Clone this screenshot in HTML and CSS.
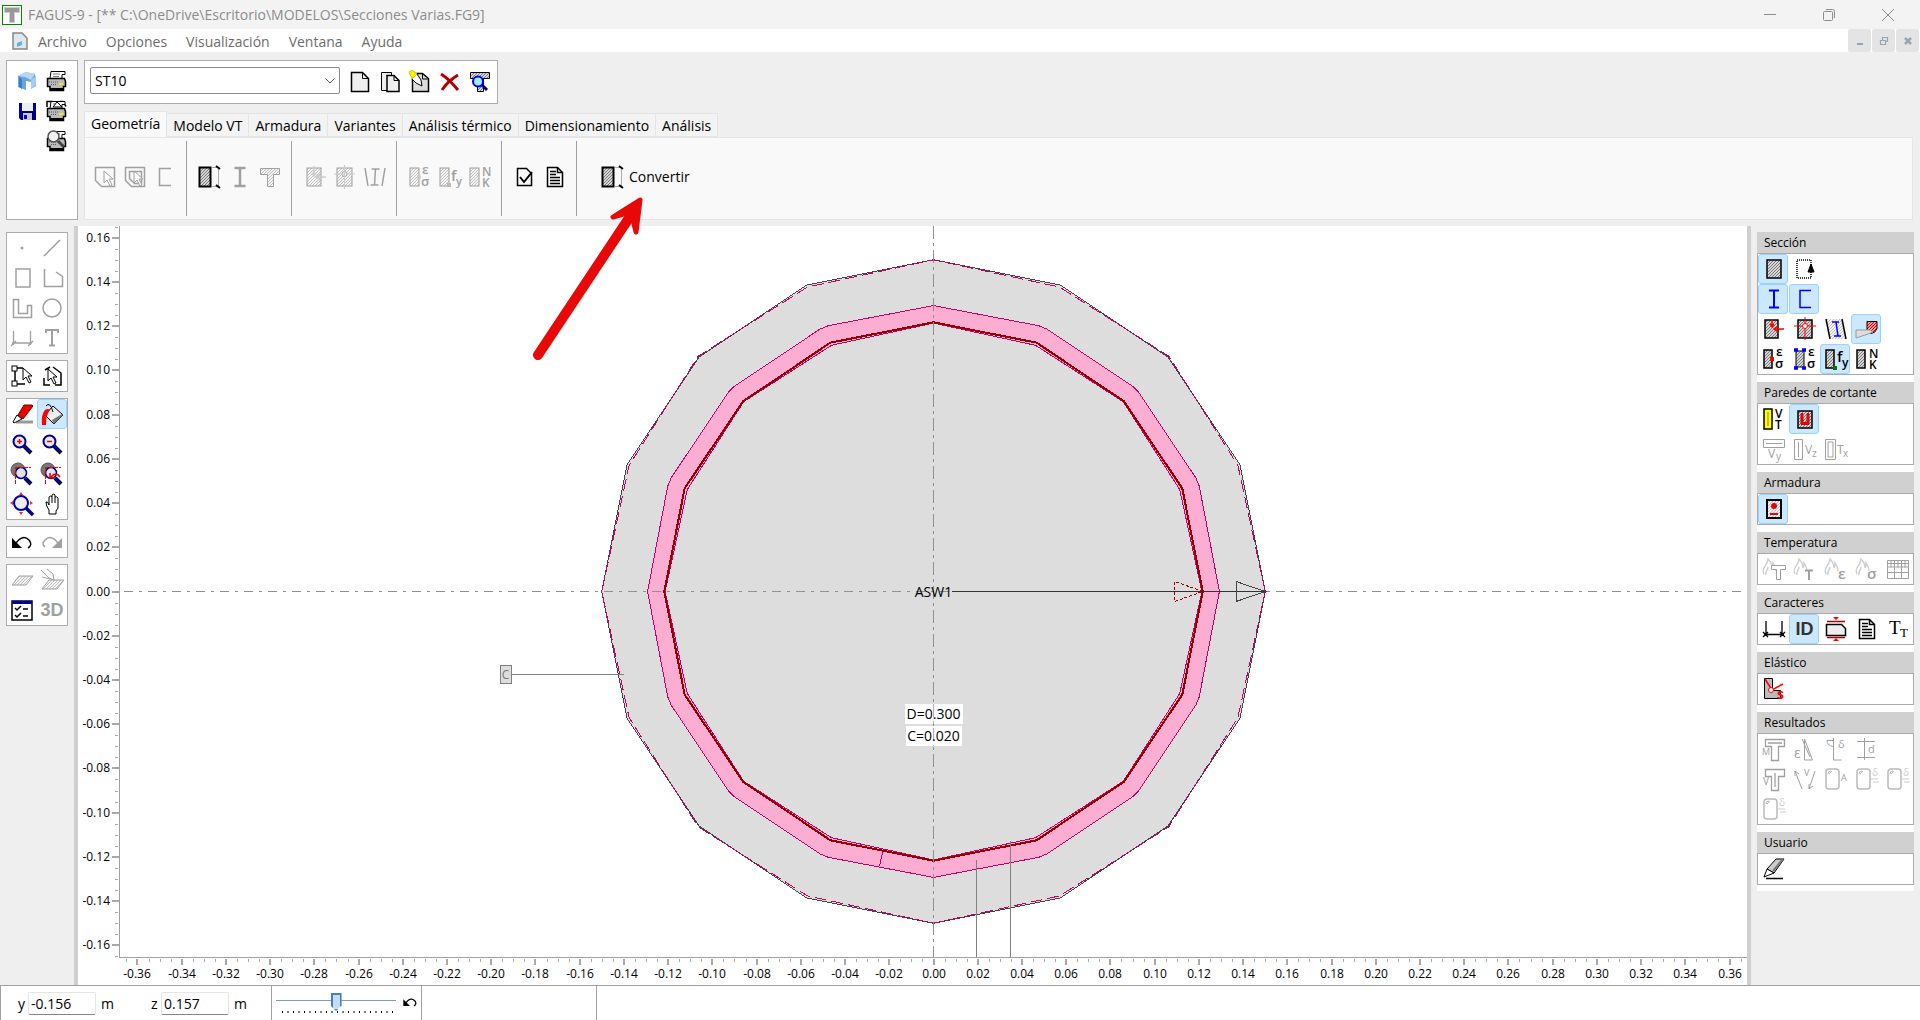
FILE: index.html
```html
<!DOCTYPE html>
<html lang="es">
<head>
<meta charset="utf-8">
<title>FAGUS-9</title>
<link rel="stylesheet" href="styles.css">
</head>
<body>
<svg class="defs" width="0" height="0" aria-hidden="true">
  <defs>
    <pattern id="h" width="3" height="3" patternUnits="userSpaceOnUse"><rect width="3" height="3" fill="#d4d4d4" stroke="none"/><path d="M-1 1L1-1M0 3L3 0M2 4L4 2" stroke="#666" stroke-width=".8"/></pattern>
    <pattern id="hg" width="3" height="3" patternUnits="userSpaceOnUse"><rect width="3" height="3" fill="#f4f4f4" stroke="none"/><path d="M-1 1L1-1M0 3L3 0M2 4L4 2" stroke="#b4b4b4" stroke-width=".8"/></pattern>
    <pattern id="hr" width="3" height="3" patternUnits="userSpaceOnUse"><rect width="3" height="3" fill="#f99" stroke="none"/><path d="M-1 1L1-1M0 3L3 0M2 4L4 2" stroke="#d00"/></pattern>
    <symbol id="printer" viewBox="0 0 24 24"><path d="M6 2.500h14v3h-3v4H5z" fill="#fff"/><path d="M8 5h7M8 7.500h6" stroke="#777"/><path d="M2.500 9.500h17l1 3v5h-2v4H5v-4H2.500z" fill="#bbb" stroke-width="1.500"/><path d="M4 13h10M6 15.500h6" stroke="#555" stroke-dasharray="1 1"/><path d="M14 15h4" stroke="#ee0" stroke-width="2"/><path d="M5 20h14" stroke-width="2"/></symbol>
    <symbol id="lens" viewBox="0 0 24 24"><path d="M14 14l7 7" stroke="#000" stroke-width="4"/><path d="M14 14l6.500 6.500" stroke="#00c" stroke-width="2"/><circle cx="9.500" cy="9.500" r="6" fill="#e8e8f4" stroke="#00008b" stroke-width="2"/></symbol>
    <symbol id="graylens" viewBox="0 0 24 24"><circle cx="8" cy="8" r="7" fill="#777" stroke="#555"/><path d="M15 16l6 6" stroke="#000" stroke-width="4"/><path d="M15 16l5.500 5.500" stroke="#00c" stroke-width="2"/><circle cx="11" cy="11" r="5.500" fill="#e4e4ec" stroke="#00008b" stroke-width="1.500"/><path d="M5.500 22V5.500H21" stroke="#e00" stroke-dasharray="4 1"/></symbol>
    <symbol id="convert" viewBox="0 0 24 24"><rect x="1.500" y="2.500" width="11" height="19" fill="url(#h)" stroke-width="2"/><path d="M14 2.500h7M14 21.500h7M20.500 3v18" stroke="#aaa"/><path d="M18 1l4 3M18 20l4 3" stroke-width="2"/></symbol>
    <symbol id="flame" viewBox="0 0 24 24"><path d="M2 17C-1 10 5 10 6 2c3 3 4 6 4 9 1-2 1-3 1-5 2 3 3 4 3 8M4 18c-1-4 2-5 2-8" stroke="#d0d0d0" stroke-width="1.500"/></symbol>
    <symbol id="cursor" viewBox="0 0 12 18"><path d="M1 1v12l3-3 3 6 2-1-3-6h4z" fill="#fff"/></symbol>
    <symbol id="stress" viewBox="0 0 24 24"><text font-size="13" font-weight="600"><tspan x="14" y="9">ε</tspan><tspan x="13" y="21">σ</tspan></text></symbol>
    <symbol id="page" viewBox="0 0 24 24"><path d="M4.500 2.500h10l5 5v14h-15z"/><path d="M14.500 2.500v5h5"/></symbol>
    <symbol id="lines" viewBox="0 0 24 24"><path d="M7 6.500h6M7 9.500h6M7 12.500h10M7 15.500h10M7 18.500h10" stroke-width="1.500"/></symbol>
    <symbol id="frame" viewBox="0 0 24 24"><rect x="2" y="2" width="13" height="20" rx="3" stroke-width="1.500" stroke="#bbb"/><path d="M4 7q0-3 3-3M5 7l3-3" stroke="#bbb"/></symbol>
  </defs>
</svg>

<header class="titlebar">
  <svg class="logo" viewBox="0 0 20 20"><rect x=".5" y=".5" width="19" height="19" fill="#fff" stroke="#080"/><path d="M2.500 2.500h15v5h-5v10h-5v-10h-5z" fill="#999" stroke="#ccc"/></svg>
  <h1>FAGUS-9 - [** C:\OneDrive\Escritorio\MODELOS\Secciones Varias.FG9]</h1>
  <div class="winbtns">
    <button aria-label="Minimizar"><svg viewBox="0 0 12 12"><path d="M0 5.500h12"/></svg></button>
    <button aria-label="Restaurar"><svg viewBox="0 0 12 12"><rect x=".5" y="2.500" width="9" height="9" rx="1"/><path d="M3 .5h6.500q2 0 2 2V9"/></svg></button>
    <button aria-label="Cerrar"><svg viewBox="0 0 12 12"><path d="M0 0l12 12M12 0L0 12"/></svg></button>
  </div>
</header>

<nav class="menubar">
  <svg class="doc" viewBox="0 0 16 18"><path d="M1 1h9l5 5v11H1z" fill="#dfe6ec" stroke="#888" stroke-width="1.500"/><path d="M5 11l5-2v4l-5 2z" fill="#5ab4e8" stroke="none"/></svg>
  <a href="#">Archivo</a><a href="#">Opciones</a><a href="#">Visualización</a><a href="#">Ventana</a><a href="#">Ayuda</a>
  <div class="mdi">
    <button aria-label="Minimizar ventana"><svg viewBox="0 0 10 10"><path d="M2 8h6" stroke-width="2"/></svg></button>
    <button aria-label="Restaurar ventana"><svg viewBox="0 0 10 10"><path d="M1.500 4.500h5v4h-5zM3.500 4V1.500h5v4H7" stroke-width="1.200"/></svg></button>
    <button aria-label="Cerrar ventana"><svg viewBox="0 0 10 10"><path d="M2 2l6 6M8 2L2 8" stroke-width="2.500"/></svg></button>
  </div>
</nav>

<div class="top">
  <div class="box filebox">
    <button class="ib" aria-label="Abrir"><svg viewBox="0 0 24 24"><g stroke="none"><path d="M3 7l8-4 9 2 1 6v6l-5 3v-7l-5-1v9l-8-3z" fill="#6aa5dd"/><path d="M3 7l8-4 9 2-4 6-6-3z" fill="#b5d9f5"/><path d="M7 10v10l-3-2V8z" fill="#3f7fc4"/><path d="M16 11l5-4v9l-5 4z" fill="#a5cdf0"/></g></svg></button>
    <button class="ib" aria-label="Imprimir"><svg viewBox="0 0 24 24"><use href="#printer"/></svg></button>
    <button class="ib" aria-label="Guardar"><svg viewBox="0 0 24 24"><g stroke="none"><path d="M4 4h3v8h11V4h3v17H6l-2-2z" fill="#00008b"/><path d="M7 4h11v8H7z" fill="#eee"/><path d="M8 14h9v7H8z" fill="#c8c8c8"/><path d="M9 16h3v4H9z" fill="#00f"/></g></svg></button>
    <button class="ib" aria-label="Imprimir lista"><svg viewBox="0 0 24 24"><path d="M2 8V2.500h5L10 6M15 2.500h3l3 5" stroke-width="1.500"/><use href="#printer"/><path d="M8 8l4-5 5 5z" fill="#fff"/></svg></button>
    <span></span>
    <button class="ib" aria-label="Vista previa"><svg viewBox="0 0 24 24"><use href="#printer"/><path d="M13 12l6 6" stroke="#444" stroke-width="3"/><circle cx="8.500" cy="7.500" r="5.500" fill="#f0f0f0" stroke="#555" stroke-width="1.500"/></svg></button>
  </div>
  <div class="topright">
    <div class="box combo">
      <div class="selectwrap">
        <select aria-label="Sección activa"><option>ST10</option></select>
        <svg viewBox="0 0 10 6"><path d="M.5.500L5 5 9.500.500"/></svg>
      </div>
      <button class="ib" aria-label="Nueva"><svg viewBox="0 0 24 24"><path d="M3.500 2.500h11l6 6v13h-17z" fill="#efefef" stroke-width="1.500"/><path d="M14.500 2.500v6h6"/></svg></button>
      <button class="ib" aria-label="Copiar"><svg viewBox="0 0 24 24"><path d="M3.500 2.500h10v18h-10z" fill="#efefef"/><path d="M9 5.500h7l5 5v11H9z" fill="#efefef" stroke-width="1.500"/><path d="M16 5.500v5h5"/></svg></button>
      <button class="ib" aria-label="Editar"><svg viewBox="0 0 24 24"><path d="M4.500 4.500V21.500h16v-13l-6-5h-8" fill="#ddd" stroke-width="1.500"/><path d="M14.500 4v5h6"/><path d="M4 9l5-5 4 6 1 6-6-3z" fill="#fff"/><path d="M1 2l3-2 5 4-5 5z" fill="#fe0" stroke="#cc0"/></svg></button>
      <button class="ib" aria-label="Borrar"><svg viewBox="0 0 24 24"><g stroke="#b00000"><path d="M3 4q8 5 17 16" stroke-width="3"/><path d="M20 5Q10 11 4 20" stroke-width="3"/></g></svg></button>
      <button class="ib" aria-label="Buscar sección"><svg viewBox="0 0 24 24"><path d="M2.500 2.500h19v6h-6v13h-6v-13h-7z" fill="url(#h)"/><path d="M13 14l6 6" stroke="#00008b" stroke-width="3"/><circle cx="10" cy="11.500" r="5" fill="#9fefff" stroke="#00f" stroke-width="2"/></svg></button>
    </div>
    <div class="tabs" role="tablist">
      <button role="tab" aria-selected="true" class="tab on">Geometría</button><button role="tab" class="tab">Modelo VT</button><button role="tab" class="tab">Armadura</button><button role="tab" class="tab">Variantes</button><button role="tab" class="tab">Análisis térmico</button><button role="tab" class="tab">Dimensionamiento</button><button role="tab" class="tab">Análisis</button>
    </div>
    <div class="ribbon">
      <div class="group off">
        <button class="ib"><svg viewBox="0 0 24 24"><path d="M2.500 2.500h19v19h-13l-6-6z" stroke-width="1.500"/><use href="#cursor" x="10" y="5" width="12" height="18"/></svg></button>
        <button class="ib"><svg viewBox="0 0 24 24"><path d="M2.500 2.500h19v19h-13l-6-6zM6.500 6.500h12v12h-7l-5-5z" stroke-width="1.500"/><use href="#cursor" x="10" y="5" width="12" height="18"/></svg></button>
        <button class="ib"><svg viewBox="0 0 24 24"><path d="M18 3.500H6.500v17H18" stroke-width="1.500"/></svg></button>
      </div>
      <div class="group">
        <button class="ib"><svg viewBox="0 0 24 24"><use href="#convert"/></svg></button>
        <button class="ib off"><svg viewBox="0 0 24 24"><path d="M6.500 3h11M6.500 21h11M12 3v18" stroke-width="2.500"/></svg></button>
        <button class="ib off"><svg viewBox="0 0 24 24"><path d="M2.500 3.500h19v6h-6v12h-6v-12h-7z" fill="url(#hg)"/></svg></button>
      </div>
      <div class="group off">
        <button class="ib"><svg viewBox="0 0 24 24"><rect x="4" y="3" width="14" height="18" fill="url(#hg)"/><path d="M11 1v9M9 8l2 3 2-3M23 12h-9M17 9l-4 3 4 3" stroke="#ccc" stroke-width="1.500"/></svg></button>
        <button class="ib"><svg viewBox="0 0 24 24"><rect x="4" y="3" width="15" height="18" fill="url(#hg)"/><circle cx="11.500" cy="9" r="2.500" fill="#fff"/><path d="M1 9h21M11.500 0v24" stroke="#ccc"/></svg></button>
        <button class="ib"><svg viewBox="0 0 24 24"><path d="M2 3l3 18M22 3l-3 18M8.500 4h8M7.500 20h8M12.500 4l-1 16" stroke-width="1.500"/></svg></button>
      </div>
      <div class="group off">
        <button class="ib"><svg viewBox="0 0 24 24"><rect x="2" y="3" width="9" height="18" fill="url(#hg)"/><path d="M9 12h4" stroke-width="3" stroke="#ccc"/><use href="#stress"/></svg></button>
        <button class="ib"><svg viewBox="0 0 24 24"><rect x="2" y="3" width="9" height="18" fill="url(#hg)"/><path d="M9 20h4" stroke-width="4" stroke="#bbb"/><text font-weight="600"><tspan x="13" y="16" font-size="15">f</tspan><tspan x="18" y="20" font-size="11">y</tspan></text></svg></button>
        <button class="ib"><svg viewBox="0 0 24 24"><rect x="2" y="3" width="9" height="18" fill="url(#hg)"/><text font-size="12" font-weight="600"><tspan x="14" y="11">N</tspan><tspan x="14" y="22">K</tspan></text></svg></button>
      </div>
      <div class="group">
        <button class="ib"><svg viewBox="0 0 24 24"><path d="M4.500 3.500h9l5 5v12h-14z" fill="#fff" stroke-width="1.500"/><path d="M7 12l4 5 8-10" stroke-width="2"/></svg></button>
        <button class="ib"><svg viewBox="0 0 24 24"><use href="#page" stroke-width="1.500"/><use href="#lines"/></svg></button>
      </div>
      <button class="convert"><svg viewBox="0 0 24 24"><use href="#convert"/></svg>Convertir</button>
    </div>
  </div>
</div>

<main class="work">
  <aside class="tools">
    <div class="box off">
      <button class="ib"><svg viewBox="0 0 24 24"><circle cx="12" cy="12" r="1.500" fill="currentColor" stroke="none"/></svg></button>
      <button class="ib"><svg viewBox="0 0 24 24"><path d="M4 20L20 4" stroke-width="1.500"/></svg></button>
      <button class="ib"><svg viewBox="0 0 24 24"><rect x="6" y="3" width="14" height="18" stroke-width="1.500"/></svg></button>
      <button class="ib"><svg viewBox="0 0 24 24"><path d="M4.500 3v17.500h18v-10L16 6" stroke-width="1.500"/></svg></button>
      <button class="ib"><svg viewBox="0 0 24 24"><path d="M3.500 3.500h5v14h9v-8h4v12h-18z" stroke-width="1.500"/></svg></button>
      <button class="ib"><svg viewBox="0 0 24 24"><circle cx="12" cy="12" r="9" stroke-width="1.500"/></svg></button>
      <button class="ib"><svg viewBox="0 0 24 24"><path d="M3.500 5v14M20.500 5v14M2 17h20M1 20l5-5M18 20l5-5" stroke-width="1.300"/></svg></button>
      <button class="ib"><svg viewBox="0 0 24 24"><path d="M6 7V4h12v3M12 4v15M9 19.500h6" stroke-width="2"/></svg></button>
    </div>
    <div class="box">
      <button class="ib"><svg viewBox="0 0 24 24"><path d="M5 7v14M5 20h10M7 4h6" stroke-width="1.500"/><rect x="2" y="2" width="5" height="5" fill="#fff"/><rect x="2" y="17" width="5" height="5" fill="#fff"/><use href="#cursor" x="12" y="3" width="12" height="18"/></svg></button>
      <button class="ib"><svg viewBox="0 0 24 24"><path d="M5 6l5-3M13 3l8 6v12h-6M10 21H4v-7" stroke-width="1.500"/><use href="#cursor" x="7" y="4" width="12" height="18"/></svg></button>
    </div>
    <div class="box">
      <button class="ib"><svg viewBox="0 0 24 24"><path d="M6 20h17" stroke="#999" stroke-width="3"/><path d="M14 3h8l1 1-10 13-5-4z" fill="#e00" stroke="#700"/><path d="M7 13l5 4-8 4-1-1z" fill="#fff"/></svg></button>
      <button class="ib sel"><svg viewBox="0 0 24 24"><path d="M13 4l10 9-9 9-9-9z" fill="#eee"/><path d="M12 18l10-6 1 1-9 9z" fill="#777" stroke="none"/><path d="M6 4q4-5 7 6"/><path d="M2 23q-1-11 3-15 3-2 5 0-4 4-4 15z" fill="#f00" stroke="none"/></svg></button>
      <button class="ib"><svg viewBox="0 0 24 24"><use href="#lens"/><path d="M7 9.500h5M9.500 7v5" stroke="#e00" stroke-width="1.500"/></svg></button>
      <button class="ib"><svg viewBox="0 0 24 24"><use href="#lens"/><path d="M7 9.500h5" stroke="#e00" stroke-width="1.500"/></svg></button>
      <button class="ib"><svg viewBox="0 0 24 24"><use href="#graylens"/></svg></button>
      <button class="ib"><svg viewBox="0 0 24 24"><use href="#graylens"/><path d="M10 11v5h5M11 15q5-6 9 0" stroke="#e00" stroke-width="1.500"/></svg></button>
      <button class="ib"><svg viewBox="0 0 24 24"><path d="M15 15l8 8" stroke="#00008b" stroke-width="3.500"/><circle cx="11" cy="11" r="7" fill="#eee" stroke="#00a" stroke-width="2"/><path d="M9 3l2-3 2 3zM9 20l2 3 2-3zM3 9l-3 2 3 2zM20 9l3 2-3 2z" fill="#f22" stroke="none"/></svg></button>
      <button class="ib"><svg viewBox="0 0 24 24"><path d="M9 22v-4q-3-4-3-8 2-1 3 3V5q2-2 3 0V3q2-2 3 0v2q2-1 3 1v10l-2 3v3z" fill="#fff"/><path d="M12 5v6M15 5v6"/></svg></button>
    </div>
    <div class="box">
      <button class="ib"><svg viewBox="0 0 24 24"><path d="M6 13q7-9 13-3 4 5-1 8" stroke-width="1.500"/><path d="M2 8v10h10z" fill="#000" stroke="none"/></svg></button>
      <button class="ib off"><svg viewBox="0 0 24 24"><path d="M18 13Q11 4 5 10q-4 4 0 7" stroke-width="1.500"/><path d="M22 8v10H12z" fill="currentColor" stroke="none"/></svg></button>
    </div>
    <div class="box off">
      <button class="ib"><svg viewBox="0 0 24 24"><path d="M9 8h14l-7 9H2z" fill="url(#hg)"/></svg></button>
      <button class="ib"><svg viewBox="0 0 24 24"><path d="M9 12h15l-7 9H2z" fill="url(#hg)"/><path d="M1 2l8 8 5 2-1-6-6-5M2 9l8 2"/></svg></button>
      <button class="ib on"><svg viewBox="0 0 24 24"><rect x="2" y="3" width="20" height="19" fill="#fff" stroke-width="1.500"/><path d="M2 4.500h20" stroke="#00009a" stroke-width="3"/><path d="M5 10l2 2 4-4M5 17l2 2 4-4M13 11h5M13 18h5" stroke-width="1.500"/></svg></button>
      <button class="ib label3d">3D</button>
    </div>
  </aside>

  <section class="canvas" aria-label="Sección ST10"><svg id="plot"></svg></section>

  <aside class="side">
    <div class="stack">
      <h2>Sección</h2>
      <div class="box">
        <button class="ib sel"><svg viewBox="0 0 24 24"><rect x="5" y="3" width="14" height="18" fill="url(#h)" stroke-width="1.500"/></svg></button>
        <button class="ib"><svg viewBox="0 0 24 24"><rect x="4" y="3" width="14" height="18" stroke-dasharray="1 1" stroke-width="1.500"/><path d="M15 15l3-8 3 8z" fill="#000"/></svg></button>
        <i></i><i></i><i></i>
        <button class="ib sel"><svg viewBox="0 0 24 24"><path d="M7 3.500h10M7 20.500h10M12 4v16" stroke="#00f" stroke-width="2"/></svg></button>
        <button class="ib sel"><svg viewBox="0 0 24 24"><path d="M18 3.500H7v17h11" stroke="#00f" stroke-width="1.500"/></svg></button>
        <i></i><i></i><i></i>
        <button class="ib"><svg viewBox="0 0 24 24"><rect x="3" y="3" width="13" height="18" fill="url(#h)" stroke-width="1.500"/><path d="M10 2v7M8 7l2 3 2-3M22 12h-9M16 9l-4 3 4 3" stroke="#f00" stroke-width="1.500"/></svg></button>
        <button class="ib"><svg viewBox="0 0 24 24"><rect x="5" y="3" width="14" height="18" fill="url(#h)" stroke-width="1.500"/><circle cx="12" cy="9" r="2.500" fill="#fff" stroke="#f00"/><path d="M1 9h8M15 9h8M12 0v6M12 12v11" stroke="#f00"/></svg></button>
        <button class="ib"><svg viewBox="0 0 24 24"><path d="M2 2h16l4 20H6z" fill="url(#hg)" stroke="none"/><path d="M2 2l4 20M18 2l4 20" stroke-width="1.500"/><path d="M8 5h7M10 19h7M12 5l2 14" stroke="#00f" stroke-width="1.500"/></svg></button>
        <button class="ib sel"><svg viewBox="0 0 24 24"><path d="M12 4.500h10v7q-2 5-6 5l-4-3z" fill="url(#hr)"/><path d="M1 13h14l3 2-5 2-12 4z" fill="#ddd" stroke="#999"/></svg></button>
        <i></i>
        <button class="ib"><svg viewBox="0 0 24 24"><rect x="2" y="3" width="8" height="18" fill="url(#h)" stroke-width="1.500"/><path d="M8 12h4" stroke="#f00" stroke-width="4"/><use href="#stress"/></svg></button>
        <button class="ib"><svg viewBox="0 0 24 24"><rect x="3" y="4" width="8" height="16" fill="url(#h)"/><path d="M1 3h4M9 3h4M1 21h4M9 21h4" stroke="#00f" stroke-width="3.500"/><use href="#stress" x="1"/></svg></button>
        <button class="ib sel"><svg viewBox="0 0 24 24"><rect x="2" y="3" width="8" height="18" fill="url(#h)" stroke-width="1.500"/><path d="M9 21h4" stroke="#070" stroke-width="4"/><text font-weight="600"><tspan x="13" y="15" font-size="15">f</tspan><tspan x="18" y="20" font-size="12">y</tspan></text></svg></button>
        <button class="ib"><svg viewBox="0 0 24 24"><rect x="2" y="3" width="8" height="18" fill="url(#h)" stroke-width="1.500"/><text font-size="12" font-weight="600"><tspan x="14" y="11">N</tspan><tspan x="14" y="22">K</tspan></text></svg></button>
      </div>
      <h2>Paredes de cortante</h2>
      <div class="box">
        <button class="ib"><svg viewBox="0 0 24 24"><rect x="2" y="2" width="8" height="20" fill="#ff0" stroke-width="1.500"/><path d="M6 5v14" stroke="#880"/><text font-size="12" font-weight="600"><tspan x="13" y="11">V</tspan><tspan x="13" y="22">T</tspan></text></svg></button>
        <button class="ib sel"><svg viewBox="0 0 24 24"><rect x="5" y="4" width="14" height="17" fill="url(#h)" stroke-width="1.500"/><path d="M8 6.500h2v9h4v-9h2v11H8z" fill="#f00" stroke="#d00"/></svg></button>
        <i></i><i></i><i></i>
        <button class="ib off"><svg viewBox="0 0 24 24"><path d="M1.500 2.500h21v8h-21zM4 6.500h16" /><text><tspan x="6" y="21" font-size="12">V</tspan><tspan x="14" y="23" font-size="10">y</tspan></text></svg></button>
        <button class="ib off"><svg viewBox="0 0 24 24"><path d="M1.500 2.500h8v20h-8zM5.500 5v15"/><text><tspan x="12" y="17" font-size="12">V</tspan><tspan x="19" y="20" font-size="10">z</tspan></text></svg></button>
        <button class="ib off"><svg viewBox="0 0 24 24"><path d="M1.500 2.500h10v20h-10zM4 5h5v15H4z"/><text><tspan x="13" y="17" font-size="12">T</tspan><tspan x="19" y="20" font-size="10">x</tspan></text></svg></button>
      </div>
      <h2>Armadura</h2>
      <div class="box">
        <button class="ib sel"><svg viewBox="0 0 24 24"><rect x="5" y="3" width="14" height="18" fill="url(#hg)" stroke-width="2"/><circle cx="12" cy="9" r="3" fill="#e00" stroke="none"/><path d="M8 17h8" stroke="#f00" stroke-width="2"/></svg></button>
      </div>
      <h2>Temperatura</h2>
      <div class="box off">
        <button class="ib"><svg viewBox="0 0 24 24"><use href="#flame"/><path d="M9.500 8.500h14v4h-5v10h-4v-10h-5z" fill="#fff"/></svg></button>
        <button class="ib"><svg viewBox="0 0 24 24"><use href="#flame"/><path d="M12 13.500h8M16 13.500V23" stroke-width="2"/></svg></button>
        <button class="ib"><svg viewBox="0 0 24 24"><use href="#flame"/><text x="14" y="22" font-size="15" font-weight="600">ε</text></svg></button>
        <button class="ib"><svg viewBox="0 0 24 24"><use href="#flame"/><text x="12" y="22" font-size="15" font-weight="600">σ</text></svg></button>
        <button class="ib"><svg viewBox="0 0 24 24"><path d="M1.500 3.500h21v18h-21zM1.500 6.500h21M1.500 10h21M1.500 15.500h21M5 3.500v7M8.500 3.500v18M12 3.500v7M15.500 3.500v18M19 3.500v7"/></svg></button>
      </div>
      <h2>Caracteres</h2>
      <div class="box">
        <button class="ib"><svg viewBox="0 0 24 24"><path d="M4 4v15M20 4v15M2 17.500h20M1 20l5-5M18 20l5-5M1 15l5 5M18 15l5 5" stroke-width="1.300"/></svg></button>
        <button class="ib sel labelid">ID</button>
        <button class="ib"><svg viewBox="0 0 24 24"><path d="M2.500 7.500h15l4 4v7h-19z" fill="#eee" stroke-width="1.500"/><path d="M3 4.500h18M3 20.500h18" stroke="#a00" stroke-width="1.500"/><path d="M9 0h6l-3 3zM9 24h6l-3-3z" fill="#f00" stroke="none"/></svg></button>
        <button class="ib"><svg viewBox="0 0 24 24"><use href="#page" stroke-width="1.500"/><use href="#lines"/></svg></button>
        <button class="ib serif"><svg viewBox="0 0 24 24"><text><tspan x="3" y="17" font-size="19">T</tspan><tspan x="14" y="20" font-size="13">T</tspan></text></svg></button>
      </div>
      <h2>Elástico</h2>
      <div class="box">
        <button class="ib"><svg viewBox="0 0 24 24"><path d="M2.500 1.500h8v12h8v8h-16z" fill="#bbb"/><path d="M3 2l7 11 11-6" stroke="#f00" stroke-width="1.500"/><circle cx="9" cy="13" r="2.500" fill="#fff" stroke="#f00"/><text x="15" y="22" font-size="14" font-weight="700" class="red">s</text></svg></button>
      </div>
      <h2>Resultados</h2>
      <div class="box off">
        <button class="ib"><svg viewBox="0 0 24 24"><path d="M3.500 2.500h19v7h-6v14h-7v-14h-6zM6 6h14" stroke-width="1.300"/><text x="0" y="18" font-size="9">M</text></svg></button>
        <button class="ib"><svg viewBox="0 0 24 24"><path d="M11.500 2v21h8zM9 2l8 18" /><text x="1" y="21" font-size="14">ε</text></svg></button>
        <button class="ib"><svg viewBox="0 0 24 24"><path d="M9.500 1v22h8M9 3.500H3q0 5 6 6"/><text x="14" y="11" font-size="11">δ</text></svg></button>
        <button class="ib"><svg viewBox="0 0 24 24"><path d="M2 4.500h18M2 20.500h18M9.500 1v22"/><text x="13" y="16" font-size="11">d</text></svg></button>
        <i></i>
        <button class="ib"><svg viewBox="0 0 24 24"><path d="M3.500 2.500h19v7h-6v14h-7v-14h-6zM13 6v14" stroke-width="1.300"/><text x="1" y="18" font-size="10">V</text></svg></button>
        <button class="ib"><svg viewBox="0 0 24 24"><path d="M2 4l7 18M22 4l-6 18M2 9V4l4 3M16 17v5l4-3"/><text x="11" y="9" font-size="9">V</text></svg></button>
        <button class="ib"><svg viewBox="0 0 24 24"><use href="#frame"/><text x="17" y="14" font-size="9">A</text></svg></button>
        <button class="ib faint"><svg viewBox="0 0 24 24"><use href="#frame"/><text x="17" y="9" font-size="10">δ</text><path d="M16 12h7M18 15h6"/></svg></button>
        <button class="ib faint"><svg viewBox="0 0 24 24"><use href="#frame"/><text x="17" y="9" font-size="10">δ</text><path d="M16 12h7M18 15h6"/></svg></button>
        <button class="ib faint"><svg viewBox="0 0 24 24"><use href="#frame"/><text x="17" y="9" font-size="10">δ</text><path d="M16 12h7M18 15h6"/></svg></button>
      </div>
      <h2>Usuario</h2>
      <div class="box">
        <button class="ib"><svg viewBox="0 0 24 24"><path d="M4 21.500h17" stroke-width="1.500"/><path d="M5 12l9-10h8L12 16z" fill="#ccc"/><path d="M11 14L21 2" stroke="#777" stroke-width="2"/><path d="M2 20l3-8 7 4z" fill="#fff"/></svg></button>
      </div>
    </div>
  </aside>
</main>

<footer class="status">
  <div class="cell coords">
    <label for="cy">y</label><input id="cy" value="-0.156"><span>m</span>
    <label for="cz" class="second">z</label><input id="cz" value="0.157"><span>m</span>
  </div>
  <div class="cell zoom">
    <div class="slider"><input type="range" aria-label="Escala" min="0" max="20" value="10"><svg class="ticks"><path d="M0 1H200" stroke="#000" stroke-width="2" stroke-dasharray="1 4.500"/></svg></div>
    <button class="undo" aria-label="Restablecer"><svg viewBox="0 0 24 24"><path d="M6 13q7-9 13-3 4 5-1 8" stroke-width="2"/><path d="M2 8v10h10z" fill="#000" stroke="none"/></svg></button>
  </div>
  <div class="cell blank"></div>
  <div class="cell rest"></div>
</footer>

<svg class="arrow" viewBox="0 0 120 180" aria-hidden="true"><path d="M8 165L101 25" stroke="#e90808" stroke-width="10" stroke-linecap="round"/><path d="M110 10L83 27 97 23 103 30 106 42z" fill="#e90808" stroke="#e90808" stroke-width="5" stroke-linejoin="round"/></svg>
<script src="plot.js"></script>
</body>
</html>
```
FILE: styles.css
```css
* { box-sizing: border-box; }
body {
  margin: 0;
  min-height: 100vh;
  display: flex;
  flex-direction: column;
  background: #efefef;
  color: #000;
  font-family: "Open Sans", "Noto Sans", sans-serif;
  font-size: 14px;
  position: relative;
}
button { font: inherit; color: inherit; background: none; border: 0; padding: 0; margin: 0; }
svg { fill: none; stroke: currentColor; }
svg text { fill: currentColor; stroke: none; }
svg text.red { fill: #f00; }
symbol { overflow: visible; }
.defs { position: absolute; }

.titlebar { height: 29px; display: flex; align-items: center; background: #f3f3f3; color: #8c8c8c; padding-left: 2px; }
.logo { width: 20px; height: 20px; }
.titlebar h1 { margin: 0 0 0 6px; font-size: 14px; font-weight: 400; flex: 1; }
.winbtns { display: flex; margin-right: 3px; }
.winbtns button { width: 59px; height: 28px; display: grid; place-items: center; }
.winbtns svg { width: 12px; height: 12px; }

.menubar { height: 23px; display: flex; align-items: center; background: #fff; color: #6d6d6d; padding-left: 12px; }
.menubar .doc { width: 16px; height: 18px; margin-right: 1px; }
.menubar a { color: inherit; text-decoration: none; padding: 2px 10px 0 9px; }
.mdi { margin-left: auto; display: flex; gap: 1px; padding-right: 1px; color: #97a5b3; }
.mdi button { width: 23px; height: 23px; background: #e4e4e4; border-radius: 2px; display: grid; place-items: center; }
.mdi svg { width: 10px; height: 10px; }

.box { border: 1px solid #ababab; background: #fff; }
.ib { width: 30px; height: 30px; display: grid; place-items: center; color: #000; border: 1px solid transparent; border-radius: 3px; }
.ib svg { width: 24px; height: 24px; overflow: visible; }
.off, .off .ib, .ib.off { color: #a0a0a0; }
.off .ib.on { color: #000; }
.off .ib.faint { color: #ccc; }
.ib.sel { background: #cce8ff; border-color: #99d1ff; }

.top { display: flex; gap: 6px; padding: 8px 7px 6px 6px; }
.filebox { width: 72px; height: 160px; padding: 5px; display: grid; grid-template-columns: 30px 30px; grid-auto-rows: 30px; }
.topright { flex: 1; min-width: 0; display: flex; flex-direction: column; }
.combo { width: 414px; height: 44px; display: flex; align-items: center; padding-left: 5px; }
.selectwrap { position: relative; width: 250px; margin: 0 5px 3px 0; }
.selectwrap select { appearance: none; display: block; width: 100%; height: 27px; border: 1px solid #8a8a8a; border-radius: 2px; background: #fff; padding: 0 4px; font: inherit; color: #000; }
.selectwrap svg { position: absolute; right: 5px; top: 11px; width: 10px; height: 6px; stroke: #555; }

.tabs { display: flex; align-items: flex-end; margin-top: 7px; height: 26px; }
.tab { height: 24px; padding: 0 6px; background: #f3f3f3; border: 1px solid #e5e5e5; border-left: 0; white-space: nowrap; }
.tab.on { height: 26px; padding: 0 6px 3px; background: #f9f9f9; border-bottom: 0; border-left: 1px solid #e5e5e5; }
.ribbon { height: 83px; display: flex; background: #f9f9f9; border: 1px solid #e5e5e5; padding: 3px 0; }
.group { display: flex; align-items: center; padding: 0 6px 3px 8px; border-right: 1px solid #a0a0a0; }
.group:first-child { padding-left: 5px; }
.convert { display: flex; align-items: center; gap: 4px; padding: 0 0 4px 24px; }
.convert svg { width: 24px; height: 24px; }

.work { flex: 1; display: flex; }
.tools { width: 74px; padding: 6px 0 0 6px; display: flex; flex-direction: column; gap: 6px; }
.tools .box { width: 62px; display: grid; grid-template-columns: 30px 30px; grid-auto-rows: 30px; }
.ib.label3d { font: 700 18px "Liberation Sans", sans-serif; }
.ib.labelid { font: 700 18px "Liberation Sans", sans-serif; color: #333; }
.serif text { font-family: "Liberation Serif", serif; }
.canvas { flex: 1; min-width: 0; background: #fff; border: solid #cfcfcf; border-width: 0 4px; overflow: hidden; display: flex; }
.canvas svg { flex: 1; min-width: 0; shape-rendering: crispEdges; }
.canvas text { text-anchor: middle; }
.canvas .num { font-size: 12px; }
.canvas .end { text-anchor: end; }
.canvas .big { font-size: 14px; }
.canvas .muted { fill: #777; }

.side { padding: 6px 6px 0; }
.stack { width: 157px; background: #fff; padding-bottom: 6px; }
.side h2 { margin: 0; height: 21px; padding-left: 7px; background: #d0d0d0; font-size: 12px; font-weight: 400; line-height: 21px; }
.side .box { display: grid; grid-template-columns: repeat(5, 31px); grid-auto-rows: 30px; margin-bottom: 7px; }
.side .box:last-child { margin-bottom: 0; }
.side .ib { padding-left: 1px; }

.status { height: 35px; display: flex; background: #fff; }
.cell { border-top: 1px solid #a0a0a0; border-left: 1px solid #a0a0a0; display: flex; align-items: center; }
.coords { width: 271px; padding-left: 17px; }
.coords label { width: 10px; }
.coords label.second { margin-left: 38px; }
.coords input { width: 68px; height: 23px; border: 1px solid #e5e5e5; border-bottom-color: #868686; border-radius: 2px; padding: 0 2px; font: inherit; }
.coords span { margin-left: 5px; width: 12px; }
.zoom { width: 150px; padding-left: 4px; }
.slider { width: 120px; }
.slider input { appearance: none; display: block; width: 120px; height: 18px; margin: 0; background: linear-gradient(#7a9cc6, #7a9cc6) center 7px / 100% 1px no-repeat; }
.slider input::-webkit-slider-thumb { appearance: none; width: 11px; height: 18px; background: #c5dcf5; border: 2px solid #4a7ebb; clip-path: polygon(0 0, 100% 0, 100% 70%, 50% 100%, 0 70%); }
.ticks { display: block; width: 111px; height: 2px; margin-left: 6px; }
.undo { margin-left: 6px; height: 18px; }
.undo svg { width: 16px; height: 16px; }
.blank { width: 175px; }
.rest { flex: 1; }

.arrow { position: absolute; left: 530px; top: 190px; width: 120px; height: 180px; }
```
FILE: plot.js
```js
const svg = document.getElementById('plot');
const RULER_X = 41, RULER_Y = 28;

function draw() {
  const W = svg.clientWidth, H = svg.clientHeight;
  const bottom = H - RULER_Y;
  const cx = Math.round((RULER_X + W) / 2) + 0.5, cy = Math.round(bottom / 2) - 0.5;
  const s = bottom / 0.3306;
  const out = [];
  const line = (x1, y1, x2, y2, c, extra = '') =>
    out.push(`<path d="M${x1} ${y1}L${x2} ${y2}" stroke="${c}" ${extra}/>`);
  const text = (x, y, t, cls) => out.push(`<text x="${x}" y="${y}" class="${cls}">${t}</text>`);
  const pts = (radius, bevel = 0) => {
    const p = [];
    for (let k = 0; k < 16; k++) {
      const list = bevel && k % 4 ? [-bevel, bevel] : [0];
      for (const d of list) {
        const a = (k * 22.5 + d) * Math.PI / 180, r = radius(k) * s;
        p.push((cx + r * Math.cos(a)).toFixed(1) + ',' + (cy - r * Math.sin(a)).toFixed(1));
      }
    }
    return p.join(' ');
  };
  const poly = (p, attrs) => out.push(`<polygon points="${p}" ${attrs}/>`);
  const wobble = r => k => r + (k % 4 === 0 ? 0 : k % 4 === 2 ? 0.0005 : -0.001);

  // concrete outline, shear wall band and reinforcement
  poly(pts(() => 0.15), 'fill="#ddd" stroke="#444"');
  poly(pts(wobble(0.15)), 'stroke="#c2006b" stroke-dasharray="12 5"');
  poly(pts(() => 0.1293, 0.9), 'fill="#fcaed2" stroke="#c2006b"');
  poly(pts(k => k % 2 ? 0.1205 : 0.1214), 'fill="#ddd" stroke="#c2006b"');
  poly(pts(() => 0.1218), 'stroke="#960000" stroke-width="2"');
  line(cx - 51, cy + 261, cx - 54, cy + 275, '#c2006b');

  // axes
  line(RULER_X + 5, cy, W - 4, cy, '#909090', 'stroke-dasharray="9 6 3 6"');
  line(cx, 0, cx, bottom, '#909090', 'stroke-dasharray="13 4 3 4"');
  line(cx + 18, cy, cx + 0.15 * s, cy, '#333');
  const r1 = cx + 0.15 * s, r2 = cx + 0.1218 * s;
  out.push(`<path d="M${r1} ${cy}l-29 -10v20z" stroke="#444"/>`);
  out.push(`<path d="M${r2} ${cy}l-28 -10v20z" stroke="#960000" stroke-dasharray="3 2"/>`);
  line(cx + 43, cy + 268, cx + 43, bottom, '#808080');
  line(cx + 77, cy + 249, cx + 77, bottom, '#808080');

  // annotations
  text(cx, cy + 5, 'ASW1', 'big');
  out.push(`<rect x="${cx - 28.5}" y="${cy + 112}" width="58" height="20" fill="#fff" stroke="none"/>`);
  out.push(`<rect x="${cx - 27.5}" y="${cy + 134}" width="56" height="20" fill="#fff" stroke="none"/>`);
  line(cx, cy + 112, cx, cy + 154, '#b0b0b0', 'stroke-dasharray="13 4 3 4"');
  text(cx, cy + 127, 'D=0.300', 'big');
  text(cx, cy + 149, 'C=0.020', 'big');
  line(cx - 422, cy + 83, cx - 310, cy + 83, '#808080');
  out.push(`<rect x="${cx - 433}" y="${cy + 74}" width="11" height="18" fill="#ddd" stroke="#808080"/>`);
  text(cx - 428, cy + 87, 'C', 'num muted');

  // rulers
  out.push(`<path d="M${RULER_X + .5} 0V${bottom + .5}H${W}" stroke="#a0a0a0"/>`);
  const nx = Math.floor((cx - RULER_X) / s / 0.005);
  for (let i = -nx; i <= nx; i++) {
    const x = Math.round(cx + i * 0.005 * s), major = i % 4 === 0;
    line(x, bottom + 2, x, bottom + (major ? 8 : 5), '#a8a8a8', major ? 'stroke-width="2"' : '');
    if (major) text(x, bottom + 21, (i * 0.005).toFixed(2).replace('-0.00', '0.00'), 'num');
  }
  const ny = Math.floor(cy / s / 0.005);
  for (let i = -ny; i <= ny; i++) {
    const y = Math.round(cy - i * 0.005 * s), major = i % 4 === 0;
    line(RULER_X - (major ? 7 : 4), y, RULER_X - (major ? 0 : 1), y, '#a8a8a8', major ? 'stroke-width="2"' : '');
    if (major) text(RULER_X - 9, y + 4, (i * 0.005).toFixed(2).replace('-0.00', '0.00'), 'num end');
  }
  svg.innerHTML = out.join('');
}
draw();
addEventListener('resize', draw);
```
